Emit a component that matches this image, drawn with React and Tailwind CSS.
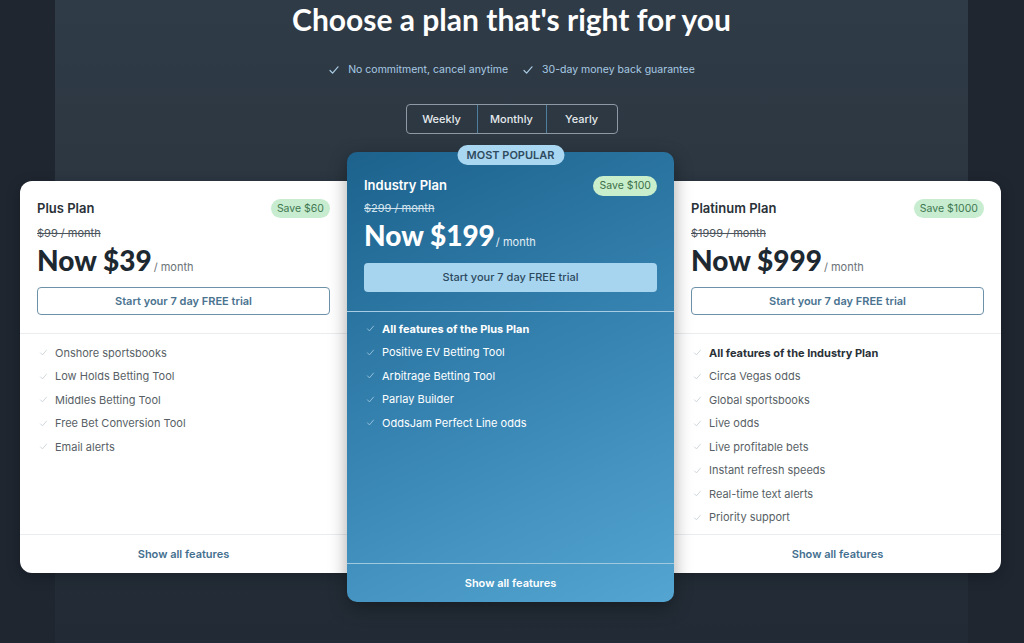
import React from "react";

const Check = ({ className = "" }) => (
  <svg viewBox="0 0 12 12" className={className} fill="none" stroke="currentColor" strokeWidth="1.2" strokeLinecap="round" strokeLinejoin="round">
    <path d="M2 6.5 L4.6 9.2 L10 2.8" />
  </svg>
);

function Feature({ text, bold, dark }) {
  return (
    <li className="flex items-center h-4 gap-[7px]">
      <Check className={"w-[9px] h-[9px] ml-[2px] " + (dark ? "text-[#9cc6e0]" : "text-[#c9d2d8]")} />
      <span
        className={
          "text-[11px] leading-4 " +
          (dark ? "text-white " : bold ? "text-[#2a3137] " : "text-[#585f66] ") +
          (bold ? "font-bold" : "")
        }
      >
        {text}
      </span>
    </li>
  );
}

function SideCard({ name, save, old, price, features, rounded }) {
  return (
    <div className={"w-[327px] h-[392px] bg-white flex flex-col shadow-[0_4px_14px_rgba(0,0,0,0.25)] " + rounded}>
      <div className="px-[17px] pt-[18px] pb-[18px] border-b border-[#e9edf0]">
        <div className="flex items-center justify-between h-5">
          <span className="text-[13px] font-semibold text-[#2a3137]">{name}</span>
          <span className="h-[19px] px-[6px] rounded-full bg-[#c7ecd0] text-[#3f7850] text-[10.5px] flex items-center">{save}</span>
        </div>
        <div className="mt-[6px] text-[11px] leading-4 text-[#4d555c] line-through">{old}</div>
        <div className="mt-[3px] flex items-baseline h-8">
          <span className="font-['Lato'] font-black text-[28px] leading-8 text-[#1d2830]">Now {price}</span>
          <span className="ml-[2px] text-[11px] text-[#6b7278]">/ month</span>
        </div>
        <button className="mt-[11px] w-full h-[28px] rounded-[4px] border border-[#6d91a9] text-[11px] font-semibold text-[#4a7390]">
          Start your 7 day FREE trial
        </button>
      </div>
      <ul className="flex-1 px-[17px] pt-[11px] flex flex-col gap-[7.5px]">
        {features.map((f, i) => (
          <Feature key={i} text={f.t} bold={f.b} />
        ))}
      </ul>
      <div className="h-[39px] border-t border-[#e9edf0] flex items-center justify-center text-[11px] font-semibold text-[#44708f]">
        Show all features
      </div>
    </div>
  );
}

export default function App() {
  return (
    <div className="w-[1024px] h-[643px] overflow-hidden bg-[#1f2630] flex justify-center font-['Inter',sans-serif]">
      <div className="w-[913px] ml-[-1px] h-full bg-[linear-gradient(to_bottom,#2f3b46,#222b35)] flex flex-col items-center">
        <h1 className="mt-[1px] font-['Lato',sans-serif] font-bold text-[30px] leading-9 text-white">
          Choose a plan that's right for you
        </h1>
        <div className="mt-[25px] flex items-center gap-[14px] text-[10.5px] text-[#a9cbe4]">
          <span className="flex items-center gap-[8px]">
            <Check className="w-[12px] h-[12px]" />
            No commitment, cancel anytime
          </span>
          <span className="flex items-center gap-[8px]">
            <Check className="w-[12px] h-[12px]" />
            30-day money back guarantee
          </span>
        </div>
        <div className="mt-[26px] flex h-[30px] rounded-[4px] border border-[#8d99a4] text-[11px] font-medium text-[#e6eaed]">
          <div className="w-[70px] flex items-center justify-center">Weekly</div>
          <div className="w-[70px] flex items-center justify-center border-x border-[#4f7e9f]">Monthly</div>
          <div className="w-[70px] flex items-center justify-center">Yearly</div>
        </div>
        <div className="mt-[18px] ml-[-35px] mr-[-33px] flex items-center">
          <SideCard
            name="Plus Plan"
            save="Save $60"
            old="$99 / month"
            price="$39"
            rounded="rounded-l-[12px]"
            features={[
              { t: "Onshore sportsbooks" },
              { t: "Low Holds Betting Tool" },
              { t: "Middles Betting Tool" },
              { t: "Free Bet Conversion Tool" },
              { t: "Email alerts" },
            ]}
          />
          <div className="relative z-10 w-[327px] h-[450px] rounded-[10px] bg-[linear-gradient(155deg,#1c628d_0%,#3683b1_50%,#54a5d1_100%)] flex flex-col shadow-[0_6px_18px_rgba(0,0,0,0.35)]">
            <div className="absolute -top-[7px] left-1/2 -translate-x-1/2 h-[20px] w-[107px] rounded-full bg-[#a9d6f1] text-[#2e4b60] text-[11px] font-semibold flex items-center justify-center">
              MOST POPULAR
            </div>
            <div className="px-[17px] pt-[24px] pb-[19px] border-b border-[#a6cde3]">
              <div className="flex items-center justify-between h-5">
                <span className="text-[13px] font-semibold text-white">Industry Plan</span>
                <span className="h-[20px] px-[6px] rounded-full bg-[#c8eecc] text-[#3d7048] text-[10.5px] flex items-center">Save $100</span>
              </div>
              <div className="mt-[4px] text-[11px] leading-4 text-[#d3e3ed] line-through">$299 / month</div>
              <div className="mt-[3px] flex items-baseline h-8">
                <span className="font-['Lato'] font-black text-[28px] leading-8 text-white">Now $199</span>
                <span className="ml-[1px] text-[11px] text-[#e2eef5]">/ month</span>
              </div>
              <button className="mt-[12px] w-full h-[29px] rounded-[4px] bg-[#a7d4ef] text-[11px] font-medium text-[#2c4a5e]">
                Start your 7 day FREE trial
              </button>
            </div>
            <ul className="flex-1 px-[17px] pt-[9px] flex flex-col gap-[7.5px]">
              <Feature text="All features of the Plus Plan" bold dark />
              <Feature text="Positive EV Betting Tool" dark />
              <Feature text="Arbitrage Betting Tool" dark />
              <Feature text="Parlay Builder" dark />
              <Feature text="OddsJam Perfect Line odds" dark />
            </ul>
            <div className="h-[39px] border-t border-[#a0c9e0] flex items-center justify-center text-[11px] font-semibold text-white">
              Show all features
            </div>
          </div>
          <SideCard
            name="Platinum Plan"
            save="Save $1000"
            old="$1999 / month"
            price="$999"
            rounded="rounded-r-[12px]"
            features={[
              { t: "All features of the Industry Plan", b: true },
              { t: "Circa Vegas odds" },
              { t: "Global sportsbooks" },
              { t: "Live odds" },
              { t: "Live profitable bets" },
              { t: "Instant refresh speeds" },
              { t: "Real-time text alerts" },
              { t: "Priority support" },
            ]}
          />
        </div>
      </div>
    </div>
  );
}
